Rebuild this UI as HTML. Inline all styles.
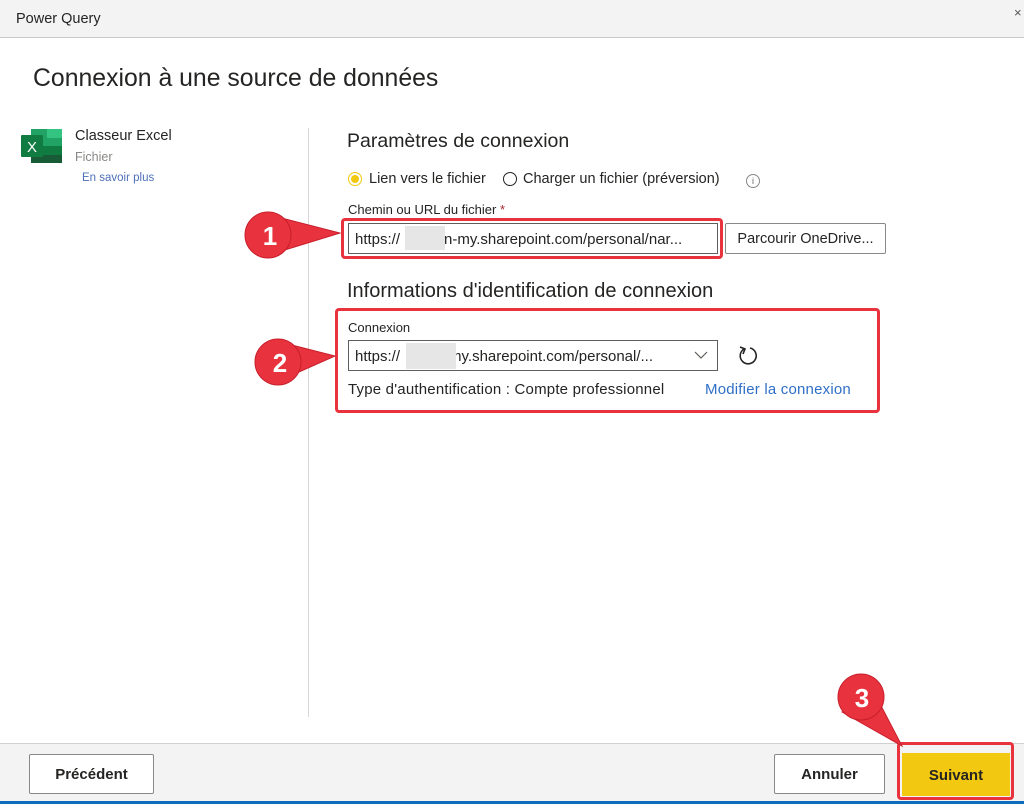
<!DOCTYPE html>
<html><head><meta charset="utf-8"><style>
*{margin:0;padding:0;box-sizing:border-box}
body{width:1024px;height:804px;position:relative;background:#fff;font-family:"Segoe UI","Liberation Sans",sans-serif;color:#252423;overflow:hidden}
.a{position:absolute;white-space:nowrap}
.inp{position:absolute;border:1px solid #605e5c;background:#fff;font-size:15px;padding:6px 6px;line-height:19px;color:#252423;overflow:hidden}
.btn{position:absolute;border:1px solid #8a8886;background:#fff;border-radius:2px;font-size:15px;text-align:center;font-weight:600}
.red{position:absolute;border:3px solid #e8333f;border-radius:4px}
.blur{position:absolute;background:#e6e6e6}
</style></head><body>
<div class="a" style="left:0;top:0;width:1024px;height:38px;background:#f3f3f3;border-bottom:1px solid #c8c8c8"></div>
<div class="a" style="left:16px;top:11px;font-size:14.5px">Power Query</div>
<div class="a" style="left:1014px;top:5px;font-size:13px;color:#555">×</div>
<div class="a" style="left:33px;top:65px;font-size:24.8px">Connexion à une source de données</div>

<svg class="a" style="left:21px;top:128px" width="42" height="36" viewBox="0 0 42 36">
<rect x="10" y="1" width="31" height="34" fill="#21a366"/>
<rect x="26" y="1" width="15" height="9" fill="#33c481"/>
<rect x="10" y="18" width="31" height="9" fill="#107c41"/>
<rect x="10" y="27" width="31" height="8" fill="#185c37"/>
<rect x="0" y="7" width="22" height="22" rx="1" fill="#107c41"/>
<text x="11" y="24" font-size="15" fill="#fff" text-anchor="middle" font-family="Liberation Sans">X</text>
</svg>
<div class="a" style="left:75px;top:128px;font-size:14.5px">Classeur Excel</div>
<div class="a" style="left:75px;top:150px;font-size:12.5px;color:#8a8886">Fichier</div>
<div class="a" style="left:82px;top:172px;font-size:11.5px;color:#4d70b8">En savoir plus</div>

<div class="a" style="left:308px;top:128px;width:1px;height:589px;background:#d6d6d6"></div>

<div class="a" style="left:347px;top:130px;font-size:19.5px">Paramètres de connexion</div>
<div class="a" style="left:348px;top:172px;width:14px;height:14px;border-radius:50%;border:1px solid #f2c811;background:#fff"><div style="position:absolute;left:2px;top:2px;width:8px;height:8px;border-radius:50%;background:#f2c811"></div></div>
<div class="a" style="left:369px;top:171px;font-size:14.5px">Lien vers le fichier</div>
<div class="a" style="left:503px;top:172px;width:14px;height:14px;border-radius:50%;border:1.5px solid #252423"></div>
<div class="a" style="left:523px;top:171px;font-size:14.5px">Charger un fichier (préversion)</div>
<div class="a" style="left:746px;top:174px;width:14px;height:14px;border-radius:50%;border:1px solid #8a8886;font-size:9px;text-align:center;line-height:12px;color:#666">i</div>
<div class="a" style="left:348px;top:202px;font-size:13px">Chemin ou URL du fichier <span style="color:#a4262c">*</span></div>
<div class="inp" style="left:348px;top:223px;width:370px;height:31px">https://<span style="display:inline-block;width:44px"></span>n-my.sharepoint.com/personal/nar...</div>
<div class="blur" style="left:405px;top:226px;width:40px;height:24px"></div>
<div class="btn" style="left:725px;top:223px;width:161px;height:31px;line-height:30px;font-weight:400;font-size:14.5px">Parcourir OneDrive...</div>
<div class="red" style="left:341px;top:218px;width:382px;height:41px"></div>

<div class="a" style="left:347px;top:280px;font-size:20px">Informations d'identification de connexion</div>
<div class="a" style="left:348px;top:320px;font-size:13px">Connexion</div>
<div class="inp" style="left:348px;top:340px;width:370px;height:31px">https://<span style="display:inline-block;width:44px"></span>-my.sharepoint.com/personal/...</div>
<div class="blur" style="left:406px;top:343px;width:50px;height:26px"></div>
<div class="a" style="left:686px;top:343px;width:30px;height:26px;background:#fff"></div>
<svg class="a" style="left:694px;top:350px" width="14" height="10"><path d="M1 2 L7 8 L13 2" fill="none" stroke="#605e5c" stroke-width="1.2"/></svg>
<svg class="a" style="left:736px;top:344px" width="24" height="24" viewBox="0 0 24 24"><path d="M8 5 A8 8 0 1 0 14 4" fill="none" stroke="#252423" stroke-width="1.6"/><path d="M4 3 L9 5 L7 10" fill="none" stroke="#252423" stroke-width="1.6"/></svg>
<div class="a" style="left:348px;top:381px;font-size:15px;letter-spacing:0.2px">Type d'authentification : Compte professionnel</div>
<div class="a" style="left:705px;top:381px;font-size:15px;color:#2f6fc7;letter-spacing:0.2px">Modifier la connexion</div>
<div class="red" style="left:335px;top:308px;width:545px;height:105px"></div>

<div class="a" style="left:0;top:743px;width:1024px;height:61px;background:#f3f3f3;border-top:1px solid #d0d0d0"></div>
<div class="a" style="left:0;top:801px;width:1024px;height:3px;background:#0f6cbd"></div>
<div class="btn" style="left:29px;top:754px;width:125px;height:40px;line-height:40px">Précédent</div>
<div class="btn" style="left:774px;top:754px;width:111px;height:40px;line-height:40px">Annuler</div>
<div class="a" style="left:902px;top:753px;width:108px;height:43px;background:#f2c811;font-size:15px;font-weight:600;text-align:center;line-height:45px">Suivant</div>
<div class="red" style="left:897px;top:742px;width:117px;height:58px"></div>

<svg class="a" style="left:0;top:0" width="1024" height="804">
<g fill="#e8333f" stroke="#c81e2b" stroke-width="1">
<path d="M262 213 L340 233 L262 257 Z"/><circle cx="268" cy="235" r="23"/>
<path d="M272 340 L335 356 L272 384 Z"/><circle cx="278" cy="362" r="23"/>
<path d="M842 712 L902 746 L878 700 Z"/><circle cx="861" cy="697" r="23"/>
</g>
<g fill="#fff" font-family="Liberation Sans" font-weight="bold" font-size="26" text-anchor="middle">
<text x="270" y="245">1</text><text x="280" y="372">2</text><text x="862" y="707">3</text>
</g>
</svg>
</body></html>
